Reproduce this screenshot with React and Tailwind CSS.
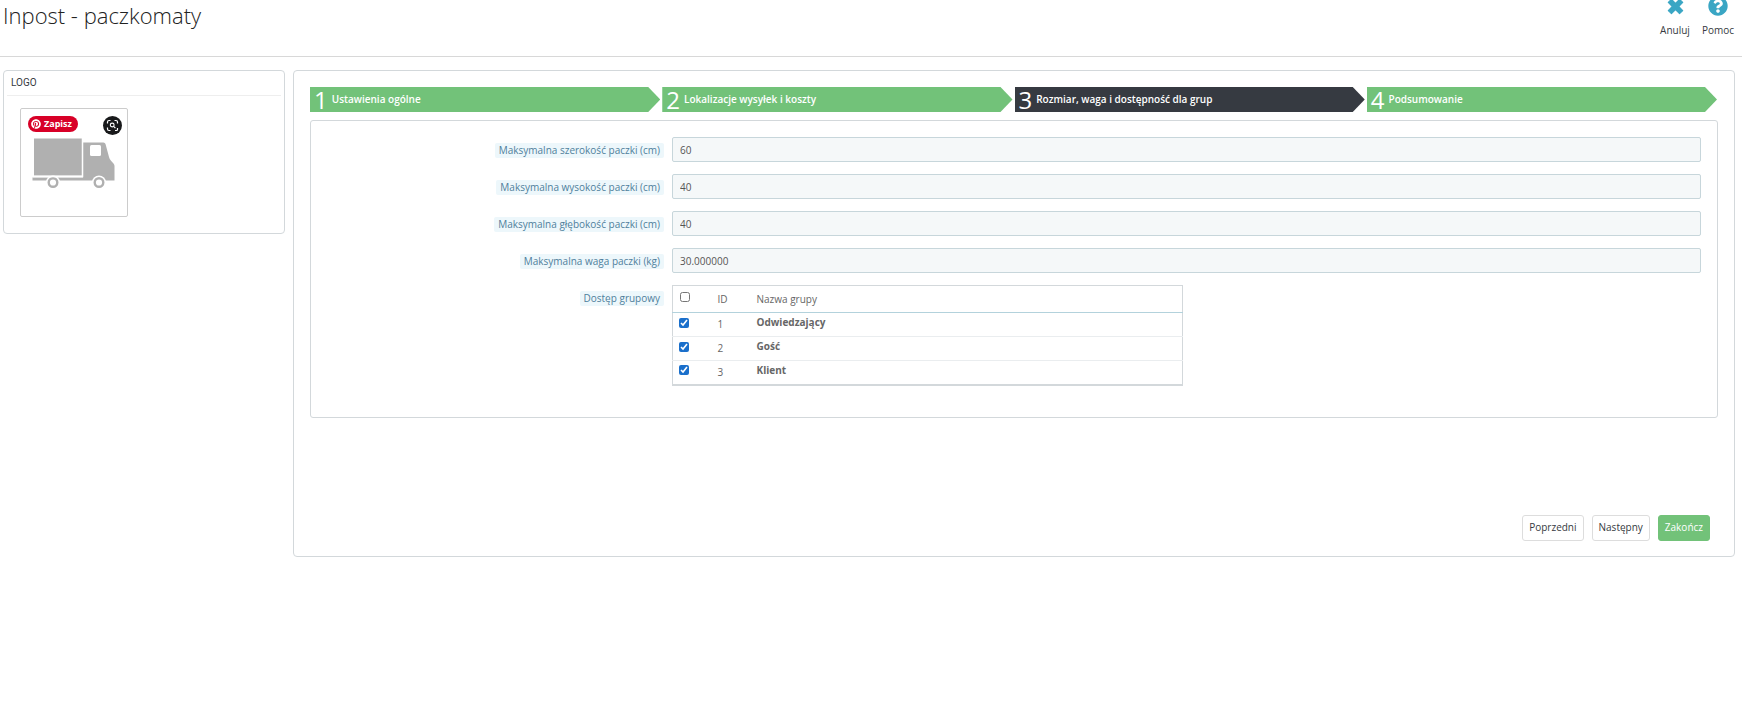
import React, { useState } from 'react';
import { FaQuestionCircle, FaPinterest } from 'react-icons/fa';

const STEPS = [
    { id: 1, label: 'Ustawienia ogólne' },
    { id: 2, label: 'Lokalizacje wysyłek i koszty' },
    { id: 3, label: 'Rozmiar, waga i dostępność dla grup' },
    { id: 4, label: 'Podsumowanie' },
];

const FIELDS = [
    { id: 'max_width', label: 'Maksymalna szerokość paczki (cm)', value: '60' },
    { id: 'max_height', label: 'Maksymalna wysokość paczki (cm)', value: '40' },
    { id: 'max_depth', label: 'Maksymalna głębokość paczki (cm)', value: '40' },
    { id: 'max_weight', label: 'Maksymalna waga paczki (kg)', value: '30.000000' },
];

const GROUPS = [
    { id: 1, name: 'Odwiedzający' },
    { id: 2, name: 'Gość' },
    { id: 3, name: 'Klient' },
];

const TimesIcon = () => (
    <svg viewBox="0 0 16 16" className="h-[17px] w-[17px]" fill="currentColor" aria-hidden="true">
        <path d="M4.200 1.200 8 5 11.800 1.200 14.800 4.200 11 8 14.800 11.800 11.800 14.800 8 11 4.200 14.800 1.200 11.800 5 8 1.200 4.200Z" stroke="currentColor" strokeLinejoin="round" />
    </svg>
);

const LensIcon = () => (
    <svg viewBox="0 0 19 19" className="h-[19px] w-[19px]" fill="none" aria-hidden="true">
        <circle cx="9.5" cy="9.5" r="9.5" fill="#18191b" />
        <path d="M4.5 7.5V6a1.5 1.5 0 0 1 1.5-1.5h1.5M11.5 4.5H13A1.5 1.5 0 0 1 14.5 6v1.5M4.5 11.5V13A1.5 1.5 0 0 0 6 14.5h1.5M14.5 12v1.5a1 1 0 0 1-1 1H12" stroke="#fff" strokeWidth="1.2" />
        <circle cx="9.2" cy="9" r="1.9" stroke="#fff" strokeWidth="1.1" />
        <path d="m10.6 10.4 1.8 1.8" stroke="#fff" strokeWidth="1.2" />
    </svg>
);

const TruckLogo = () => (
    <svg viewBox="0 0 84 52" className="h-[52px] w-[84px]" aria-hidden="true">
        <g fill="#b0b0b0">
            <path d="M2 .5h48v37H2z" />
            <path d="M.5 39.500H51V4.500h20.500q1.500 0 2 1.500L77 19q.6 2.500 2.200 4l2.300 2.500q1 1 1 2.500v14.500H.500z" />
        </g>
        <rect x="58" y="7" width="11" height="11" rx="1.500" fill="#fff" />
        {[21, 67].map((cx) => (
            <g key={cx}>
                <circle cx={cx} cy="44.500" r="7" fill="#fff" />
                <circle cx={cx} cy="44.500" r="4.300" fill="#fff" stroke="#b0b0b0" strokeWidth="2.400" />
            </g>
        ))}
        <path d="M50.500 0v38.500H1" fill="none" stroke="#fff" strokeWidth="1.500" />
    </svg>
);

const StepBar = ({ current }) => (
    <ol className="grid grid-cols-4 gap-[2px] pr-px">
        {STEPS.map((step) => (
            <li key={step.id} className="flex">
                <a
                    href={`#step-${step.id}`}
                    className={`flex h-[25px] flex-1 items-center gap-1 pl-1 text-white [clip-path:polygon(0_0,calc(100%-12px)_0,100%_50%,calc(100%-12px)_100%,0_100%)] ${step.id === current ? 'bg-[#363a41]' : 'bg-[#72c279]'}`}
                >
                    <span className="text-2xl leading-6">{step.id}</span>
                    <span className="text-[10px] font-semibold">{step.label}</span>
                </a>
            </li>
        ))}
    </ol>
);

const FieldLabel = ({ htmlFor, children }) => (
    <div className="flex items-start justify-end pt-[6px]">
        <label htmlFor={htmlFor} className="rounded-xs bg-[#edf7fb] px-1 text-[10px] leading-[15px] text-[#4f7f9c]">
            {children}
        </label>
    </div>
);

const GroupTable = () => {
    const [checked, setChecked] = useState([1, 2, 3]);

    const toggle = (id) => {
        setChecked((prev) => (prev.includes(id) ? prev.filter((x) => x !== id) : [...prev, id]));
    };

    return (
        <table id="groups" className="w-[calc(50%-4px)] table-fixed border border-b-2 border-[#d3d8db] text-left text-[10px] text-[#666]">
            <thead>
                <tr className="h-[27px] border-b border-[#b3d2dc]">
                    <th className="w-[38px] pl-[7px] align-top">
                        <input type="checkbox" aria-label="Zaznacz wszystkie" className="mt-[6px] block h-[10px] w-[10px]" />
                    </th>
                    <th className="w-[46px] pl-[7px] font-normal">ID</th>
                    <th className="font-normal">Nazwa grupy</th>
                </tr>
            </thead>
            <tbody>
                {GROUPS.map((group) => (
                    <tr key={group.id} className="h-[24px] border-t border-[#eaedef] first:border-t-0">
                        <td className="pb-1 pl-[6px]">
                            <input
                                id={`group-${group.id}`}
                                type="checkbox"
                                checked={checked.includes(group.id)}
                                onChange={() => toggle(group.id)}
                                className="block h-[10px] w-[10px] accent-[#1a6fcb]"
                            />
                        </td>
                        <td className="pl-[7px]">{group.id}</td>
                        <td className="pb-1 font-bold">
                            <label htmlFor={`group-${group.id}`}>{group.name}</label>
                        </td>
                    </tr>
                ))}
            </tbody>
        </table>
    );
};

const App = () => {
    const buttonBase = 'h-[26px] rounded-[3px] border px-[6px] text-[10px]';

    return (
        <div className="min-h-screen bg-white font-['Open_Sans',sans-serif] text-[#363a41]">
            {/* Page header */}
            <header className="flex h-[57px] items-start justify-between overflow-hidden border-b border-[#d8d8d8] pr-2 pl-[3px]">
                <h1 className="text-[22px] leading-[30px] font-light text-[#222]">Inpost - paczkomaty</h1>
                <nav className="-mt-1 flex gap-3 text-[10px]">
                    <a href="#cancel" className="flex flex-col items-center gap-2">
                        <span className="flex h-5 items-center text-[#3aa6c4]"><TimesIcon /></span>
                        <span className="leading-3">Anuluj</span>
                    </a>
                    <a href="#help" className="flex flex-col items-center gap-2">
                        <FaQuestionCircle className="h-5 w-5 text-[#3aa6c4]" />
                        <span className="leading-3">Pomoc</span>
                    </a>
                </nav>
            </header>

            <div className="flex items-start gap-2 pt-[13px] pr-[7px] pl-[3px]">
                {/* Carrier logo */}
                <aside className="w-[282px] shrink-0 rounded border border-[#d3d8db] px-[3px] pb-4">
                    <h2 className="border-b border-[#eee] pl-1 font-['Roboto',sans-serif] text-[10px] leading-6">LOGO</h2>
                    <div className="mt-3 ml-[13px] flex h-[109px] w-[108px] flex-col items-center rounded-xs border border-[#ccc] pt-[7px]">
                        <div className="flex w-full items-start justify-between pr-[5px] pl-[7px]">
                            <button type="button" className="flex h-4 items-center gap-[3px] rounded-full bg-[#d80027] pr-[6px] pl-[3px] text-[9px] font-bold text-white">
                                <FaPinterest className="h-[10px] w-[10px]" />
                                Zapisz
                            </button>
                            <button type="button" aria-label="Wyszukaj obraz"><LensIcon /></button>
                        </div>
                        <div className="mt-[3px]"><TruckLogo /></div>
                    </div>
                </aside>

                {/* Wizard */}
                <main className="flex-1 rounded border border-[#d3d8db] px-4 pt-4 pb-[15px]">
                    <StepBar current={3} />

                    <section className="mt-2 rounded-[3px] border border-[#d3d8db] pt-4 pr-4 pb-[31px] pl-[10px]">
                        <form className="grid grid-cols-[1fr_3fr] gap-x-2 gap-y-3">
                            {FIELDS.map((field) => (
                                <React.Fragment key={field.id}>
                                    <FieldLabel htmlFor={field.id}>{field.label}</FieldLabel>
                                    <input
                                        id={field.id}
                                        type="text"
                                        defaultValue={field.value}
                                        className="h-[25px] w-full rounded-xs border border-[#c7d6db] bg-[#f5f8f9] px-[7px] text-[10px] text-[#555]"
                                    />
                                </React.Fragment>
                            ))}
                            <FieldLabel htmlFor="groups">Dostęp grupowy</FieldLabel>
                            <GroupTable />
                        </form>
                    </section>

                    <div className="mt-[97px] flex justify-end gap-2 pr-2">
                        <button type="button" className={`${buttonBase} border-[#ddd] bg-white`}>Poprzedni</button>
                        <button type="button" className={`${buttonBase} border-[#ddd] bg-white`}>Następny</button>
                        <button type="button" className={`${buttonBase} border-[#72c279] bg-[#72c279] text-white`}>Zakończ</button>
                    </div>
                </main>
            </div>
        </div>
    );
};

export default App;
